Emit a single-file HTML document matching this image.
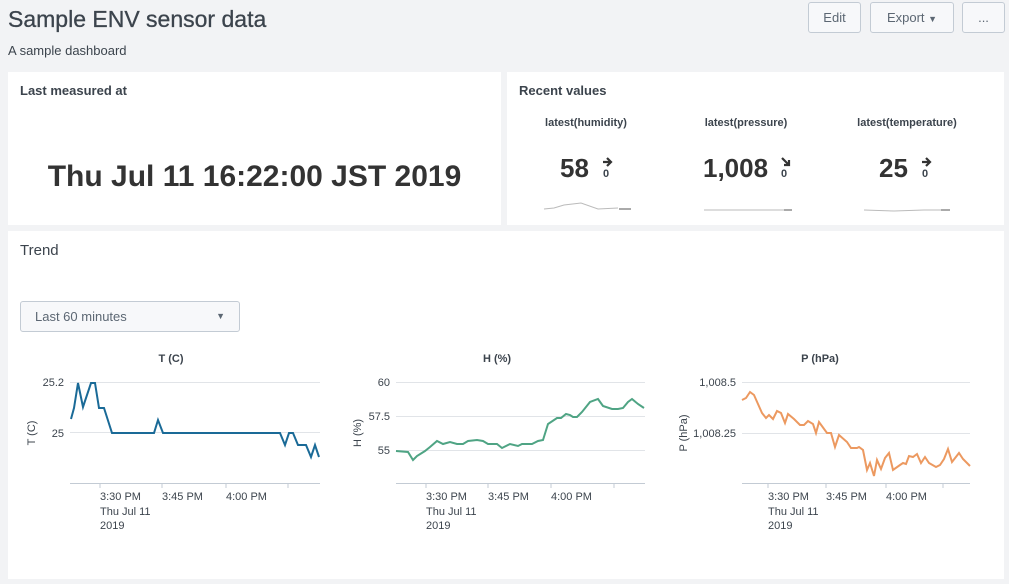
<!DOCTYPE html>
<html><head><meta charset="utf-8"><style>
*{margin:0;padding:0;box-sizing:border-box}
body{width:1009px;height:584px;background:#f2f3f5;font-family:"Liberation Sans",sans-serif;color:#3c444d;position:relative;overflow:hidden}
.a{position:absolute}
.p{position:absolute;background:#fff}
.btn{position:absolute;top:2px;height:31px;border:1px solid #c3cbd4;border-radius:3px;background:#f7f8fa;font-size:13px;color:#5c6773;text-align:center;line-height:29px}
.h{font-size:13px;font-weight:bold;color:#3c444d}
.st{font-size:11px;font-weight:bold;color:#3c444d;text-align:center;width:160px}
.big{font-size:26px;font-weight:bold;color:#333}
svg text{font-family:"Liberation Sans",sans-serif;font-size:11px;fill:#3c444d}
</style></head><body>
<div class="a" style="left:8px;top:6px;font-size:23px;color:#3c444d;-webkit-text-stroke:0.3px #3c444d">Sample ENV sensor data</div>
<div class="a" style="left:8px;top:43px;font-size:13px;color:#3c444d">A sample dashboard</div>
<div class="btn" style="left:808px;width:53px">Edit</div>
<div class="btn" style="left:870px;width:84px">Export <span style="font-size:9px">&#9660;</span></div>
<div class="btn" style="left:962px;width:43px">...</div>

<div class="p" style="left:8px;top:72px;width:493px;height:153px"></div>
<div class="a h" style="left:20px;top:83px">Last measured at</div>
<div class="a" style="left:8px;top:160px;width:493px;text-align:center;font-size:30px;font-weight:bold;color:#333">Thu Jul 11 16:22:00 JST 2019</div>

<div class="p" style="left:507px;top:72px;width:497px;height:153px"></div>
<div class="a h" style="left:519px;top:83px">Recent values</div>
<div class="a st" style="left:506px;top:117px">latest(humidity)</div>
<div class="a st" style="left:666px;top:117px">latest(pressure)</div>
<div class="a st" style="left:827px;top:117px">latest(temperature)</div>
<div class="a big" style="left:560px;top:153px">58</div>
<div class="a big" style="left:703px;top:153px">1,008</div>
<div class="a big" style="left:879px;top:153px">25</div>
<svg class="a" style="left:0;top:0" width="1009" height="230">
<g fill="none" stroke="#333" stroke-width="2.2"><path d="M603 162h8M607 158l4 4-4 4"/><path d="M782 158l7 7M789 160v5h-5"/><path d="M922 162h8M926 158l4 4-4 4"/></g>
<text x="603" y="177" style="font-size:11px;font-weight:bold">0</text>
<text x="781" y="177" style="font-size:11px;font-weight:bold">0</text>
<text x="922" y="177" style="font-size:11px;font-weight:bold">0</text>
<g fill="none" stroke="#bbb" stroke-width="1"><path d="M544 209l10-1 10-3 17-2 17 6 20 -1"/><path d="M704 210h80"/><path d="M864 210l30 1 30-1h20"/></g>
<g stroke="#555" stroke-width="1"><path d="M619 209h12M784 210h8M941 210h9"/></g>
</svg>

<div class="p" style="left:8px;top:231px;width:996px;height:348px"></div>
<div class="a" style="left:20px;top:242px;font-size:15px;color:#3c444d">Trend</div>
<div class="a" style="left:20px;top:301px;width:220px;height:31px;border:1px solid #c3cbd4;border-radius:3px;background:#f7f8fa;font-size:13px;line-height:29px;padding-left:14px;color:#5c6773">Last 60 minutes<span style="position:absolute;right:14px;font-size:9px">&#9660;</span></div>

<svg class="a" style="left:0;top:340px" width="1009" height="200" viewBox="0 340 1009 200">
<g font-weight="bold" text-anchor="middle"><text x="171" y="362" style="font-weight:bold">T (C)</text><text x="497" y="362" style="font-weight:bold">H (%)</text><text x="820" y="362" style="font-weight:bold">P (hPa)</text></g>
<g stroke="#e1e4e8" stroke-width="1"><path d="M70 382.5H320M70 432.5H320M396 382.5H645M396 416.5H645M396 450.5H645M742 382.5H970M742 433.5H970"/></g>
<g stroke="#c3cbd4" stroke-width="1" fill="none"><path d="M70 483.5H320M100 483v5M162 483v5M226 483v5M288 483v5"/><path d="M396 483.5H645M426 483v5M488 483v5M551 483v5M614 483v5"/><path d="M742 483.5H970M768 483v5M826 483v5M886 483v5M943 483v5"/></g>
<g text-anchor="end"><text x="64" y="386">25.2</text><text x="64" y="437">25</text><text x="390" y="386">60</text><text x="390" y="420">57.5</text><text x="390" y="454">55</text><text x="736" y="386">1,008.5</text><text x="736" y="437">1,008.25</text></g>
<text transform="translate(35 433) rotate(-90)" text-anchor="middle">T (C)</text>
<text transform="translate(361 433) rotate(-90)" text-anchor="middle">H (%)</text>
<text transform="translate(687 433) rotate(-90)" text-anchor="middle">P (hPa)</text>
<g><text x="100" y="500">3:30 PM</text><text x="100" y="515">Thu Jul 11</text><text x="100" y="529">2019</text><text x="162" y="500">3:45 PM</text><text x="226" y="500">4:00 PM</text>
<text x="426" y="500">3:30 PM</text><text x="426" y="515">Thu Jul 11</text><text x="426" y="529">2019</text><text x="488" y="500">3:45 PM</text><text x="551" y="500">4:00 PM</text>
<text x="768" y="500">3:30 PM</text><text x="768" y="515">Thu Jul 11</text><text x="768" y="529">2019</text><text x="826" y="500">3:45 PM</text><text x="886" y="500">4:00 PM</text></g>
<polyline fill="none" stroke="#1a6a97" stroke-width="2" points="71,419 74,408 78,383 83,407 91,383 95,383 99,408 104,408 112,433 154,433 158,420 163,433 280,433 285,445 289,433 293,433 298,445 306,445 311,457 315,445 319,457"/>
<polyline fill="none" stroke="#4fa484" stroke-width="2" points="396,451 408,452 413,460 417,456 425,451 430,447 437,441 443,444 450,442 457,444 463,444 468,441 477,440 483,441 488,444 497,444 502,448 510,444 518,446 522,444 532,444 538,441 543,440 548,424 557,418 561,418 566,414 570,415 573,417 577,417 582,412 590,402 598,399 603,406 612,409 618,409 623,408 628,402 632,399 638,404 644,408"/>
<polyline fill="none" stroke="#ec9960" stroke-width="2" points="742,400 746,398 750,392 754,395 762,413 766,418 769,415 773,419 777,411 781,413 785,423 788,414 794,419 800,425 804,425 808,421 813,424 816,433 819,422 827,433 831,433 835,447 839,435 847,442 851,448 857,448 859,447 863,450 867,470 870,463 874,476 877,460 881,469 885,458 889,453 893,470 900,465 903,463 906,464 909,456 913,457 917,454 921,463 925,457 929,463 936,467 940,465 944,459 948,449 952,462 959,453 963,459 970,466"/>
</svg>
</body></html>
